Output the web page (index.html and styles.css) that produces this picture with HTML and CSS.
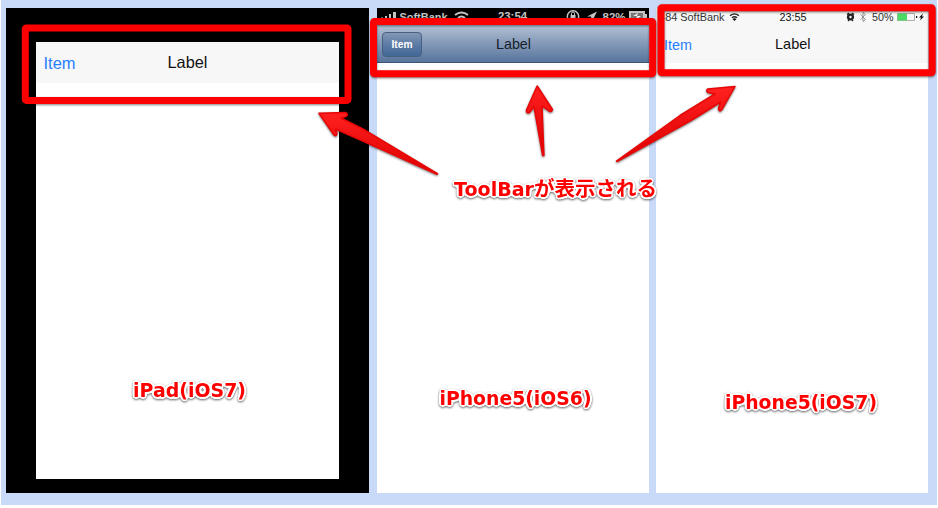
FILE: index.html
```html
<!DOCTYPE html>
<html lang="ja">
<head>
<meta charset="utf-8">
<title>ToolBar</title>
<link rel="stylesheet" href="styles.css">
</head>
<body>
<main class="board">
  <section class="tablet">
    <div class="tablet-screen">
      <div class="toolbar tablet-bar"><svg width="303" height="41"><text class="item" x="7.5" y="27" textLength="32" lengthAdjust="spacingAndGlyphs">Item</text><text class="label" x="131.5" y="26" textLength="40" lengthAdjust="spacingAndGlyphs">Label</text></svg></div>
    </div>
  </section>
  <section class="phone">
    <div class="status dark"><svg width="272" height="17">
      <g fill="#c4c4c4">
        <path d="M4 9.500h2v3H4zM8 8h2v5H8zM12 6h2v7h-2zM16 4h3v9h-3z"/>
        <text x="22.500" y="12.500" textLength="48" lengthAdjust="spacingAndGlyphs">SoftBank</text>
        <text x="121" y="12" textLength="29" lengthAdjust="spacingAndGlyphs">23:54</text>
        <text x="225.500" y="12.500" textLength="23" lengthAdjust="spacingAndGlyphs">82%</text>
        <path d="M210 8.500l10-5-5 10-1-5z"/>
        <path d="M193.500 7h5v4h-5z"/>
      </g>
      <g fill="none" stroke="#c4c4c4" stroke-width="2">
        <path d="M78 7q6.500-5 13 0M81 10q3.500-3 7 0"/>
        <circle cx="196" cy="8.500" r="5.700" stroke-width="1.500"/>
        <path d="M194.500 7V5.500a1.500 1.500 0 0 1 3 0V7" stroke-width="1"/>
        <path d="M253 4h14v9h-14z" fill="#777"/>
      </g>
      <path d="M268 6h2v5h-2z" fill="#c4c4c4"/>
      <path d="M256 8l5-3-1 3h4l-5 4 1-4z" fill="#eee"/>
    </svg></div>
    <div class="toolbar glossy">
      <span class="button"><svg width="38" height="23"><text x="8.500" y="15" textLength="21" lengthAdjust="spacingAndGlyphs">Item</text></svg></span>
      <svg width="90" height="38"><text class="dim" x="-1" y="23.500" textLength="35" lengthAdjust="spacingAndGlyphs">Label</text></svg>
    </div>
  </section>
  <section class="phone last">
    <div class="status light"><svg width="272" height="17">
      <g fill="#333">
        <text x="4.500" y="12.500" textLength="63" lengthAdjust="spacingAndGlyphs">-84 SoftBank</text>
        <text x="122.500" y="12.500" textLength="27" fill="#111" lengthAdjust="spacingAndGlyphs">23:55</text>
        <text x="215" y="12.500" textLength="21.500" lengthAdjust="spacingAndGlyphs">50%</text>
        <path d="M77.500 13l-2-2q2-1.500 4 0z" fill="#111"/>
      </g>
      <g fill="none" stroke="#222" stroke-width="1.400">
        <path d="M73 7.700q4.500-3.600 9 0M75 9.800q2.500-2 5 0"/>
        <circle cx="193.500" cy="9" r="2.400" stroke-width="2.400"/>
        <path d="M190 6.500l2-1.500M197 6.500l-2-1.500M191 13l1-1M196 13l-1-1"/>
        <path d="M203.500 6.500l5 5-2.500 2v-9l2.500 2-5 5" stroke="#888" stroke-width=".9"/>
        <path d="M240.500 5.500h17v7h-17z" stroke="#999" stroke-width=".8"/>
      </g>
      <path d="M240.500 5.500h9.500v7h-9.500z" fill="#4cd964"/>
      <path d="M259 8h1.200v2H259zM266 5.500l-4 4h2l-1 3 4-4h-2z" fill="#111"/>
    </svg></div>
    <div class="toolbar flat"><svg width="272" height="38"><text class="item small" x="7" y="24.500" textLength="28" lengthAdjust="spacingAndGlyphs">Item</text><text class="label small" x="118" y="23.500" textLength="35.500" lengthAdjust="spacingAndGlyphs">Label</text></svg></div>
  </section>
</main>
<svg class="notes" width="938" height="508" viewBox="0 0 938 508">
  <defs>
    <linearGradient id="red" x1="0" y1="0" x2="0" y2="1"><stop offset="0" stop-color="#ff2020"/><stop offset="1" stop-color="#dc0000"/></linearGradient>
    <filter id="outline" x="-5%" y="-10%" width="110%" height="120%" color-interpolation-filters="sRGB">
      <feGaussianBlur in="SourceAlpha" stdDeviation="1.700"/>
      <feComponentTransfer result="wide"><feFuncA type="linear" slope="16" intercept="-.8"/></feComponentTransfer>
      <feFlood flood-color="#fff"/>
      <feComposite in2="wide" operator="in" result="halo"/>
      <feMerge><feMergeNode in="halo"/><feMergeNode in="SourceGraphic"/></feMerge>
    </filter>
  </defs>
  <g class="frame">
    <rect x="25.300" y="28" width="322.700" height="72.400" rx="1"/>
    <rect x="373.500" y="21.500" width="279.200" height="52.300" rx="1"/>
    <rect x="661" y="7.700" width="271.200" height="65" rx="1"/>
  </g>
  <g class="arrow">
    <path d="M319 113.200L345.500 112.500Q349 114 346 116.500L341 118Q352 123.500 362 128.500L437.500 173.700L437 174.300L365 142Q347 134 335.500 129L337 133.500Q336.500 137 334 135Z"/>
    <path d="M537.200 86L552.500 109.500Q552 112.500 549 111L542 106L543.900 155.500H542.700L534 106.500L529.500 112.500Q526 113.500 526.500 110Z"/>
    <path d="M735 86.500L722 109.500Q719 112.500 718.500 109L720.500 102Q700 115 690 121L617 161.500L616.500 161L680 115.500L715 94L708 92.500Q705.500 90.500 708 89Z"/>
  </g>
  <g class="caption">
    <g filter="url(#outline)">
      <text x="454" y="195.500" textLength="80" lengthAdjust="spacingAndGlyphs">ToolBar</text>
      <text class="jp" x="534" y="195.500" textLength="123" lengthAdjust="spacingAndGlyphs">が表示される</text>
      <text x="133" y="396.500" textLength="113" lengthAdjust="spacingAndGlyphs">iPad(iOS7)</text>
      <text x="439.500" y="404.500" textLength="152" lengthAdjust="spacingAndGlyphs">iPhone5(iOS6)</text>
      <text x="725" y="408.500" textLength="152" lengthAdjust="spacingAndGlyphs">iPhone5(iOS7)</text>
    </g>
  </g>
</svg>
</body>
</html>
```
FILE: styles.css
```css
* { box-sizing: border-box; }
body {
  margin: 0;
  background: #fff;
  font-family: "Liberation Sans", sans-serif;
  overflow: hidden;
}
svg { display: block; flex: none; }
.board {
  display: flex;
  width: 936px;
  height: 505px;
  margin: 0 0 0 1px;
  padding: 8px 9px 12px 5px;
  background: #c9daf8;
}
.tablet {
  flex: none;
  width: 363px;
  margin-right: 8px;
  padding: 34px 30px 14px;
  background: #000;
}
.tablet-screen {
  height: 437px;
  background: #fff;
}
.phone {
  flex: none;
  width: 272px;
  margin-right: 7px;
  background: #fff;
  overflow: hidden;
}
.phone.last { margin-right: 0; }
.last svg { margin-left: 1px; }
.toolbar { background: #f7f7f7; }
.tablet-bar { height: 41px; }
.item { font-size: 16.5px; fill: #2680ff; }
.label { font-size: 16.5px; fill: #111; }
.item.small, .label.small { font-size: 15px; }
.dim { font-size: 15px; fill: #161e29; }
.status { height: 17px; font-size: 10.5px; }
.dark { background: #000; font-weight: bold; font-size: 11px; }
.light { background: #f7f7f7; }
.glossy {
  display: flex;
  gap: 75px;
  height: 38px;
  padding-left: 5px;
  background: linear-gradient(#b2c1d3, #8499b8 50%, #57759d);
  border-bottom: 1px solid #3b5477;
}
.glossy svg { overflow: visible; }
.button {
  width: 40px;
  height: 25px;
  margin-top: 7px;
  border: 1px solid #486080;
  border-radius: 4px;
  background: linear-gradient(#8298b5, #5d7ba5 50%, #426896);
  font-size: 10.5px;
  font-weight: bold;
  fill: #fff;
}
.flat { height: 38px; }
.notes { position: absolute; left: 0; top: 0; }
.frame rect {
  fill: none;
  stroke: #f00;
  stroke-width: 7px;
  stroke-linejoin: round;
}
.frame { filter: drop-shadow(0 1px 1px rgba(0, 0, 0, .5)); }
.arrow path {
  fill: url(#red);
  stroke: #e80606;
  stroke-width: 1.5px;
  stroke-linejoin: round;
}
.arrow { filter: drop-shadow(0 1px 1px rgba(0, 0, 0, .55)); }
.caption {
  font: bold 20px "DejaVu Sans", sans-serif;
  fill: #f00;
  filter: drop-shadow(0 1px 1px rgba(0, 0, 0, .6));
}
.jp { font-family: "Noto Sans CJK JP", sans-serif; }
```
